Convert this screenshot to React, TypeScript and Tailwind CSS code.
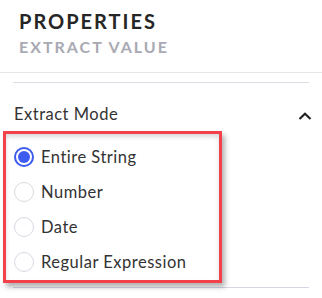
const options = ["Entire String", "Number", "Date", "Regular Expression"];

function Radio({ checked }: { checked: boolean }) {
  if (checked) {
    return (
      <span className="flex h-[20px] w-[20px] shrink-0 items-center justify-center rounded-full border-2 border-[#3d5af1]">
        <span className="h-[12px] w-[12px] rounded-full bg-[#3d5af1]" />
      </span>
    );
  }
  return <span className="h-[20px] w-[20px] shrink-0 rounded-full border border-[#d9d9e3] bg-white" />;
}

export default function App() {
  return (
    <div className="h-[298px] w-[322px] overflow-hidden bg-white font-['Lato',sans-serif]">
      <div className="px-[19px] pt-[9px] pb-[15px]">
        <div className="text-[20px] font-bold leading-[24px] tracking-[2px] text-[#262626]">PROPERTIES</div>
        <div className="mt-[4px] text-[16px] font-bold leading-[20px] tracking-[2px] text-[#a9a9b3]">EXTRACT VALUE</div>
      </div>
      <div className="border-t border-[#e6e6ea]" />
      <div className="mx-[13px] mt-[9px] border-t border-[#dcdce6]" />
      <div className="flex items-center justify-between pl-[14px] pr-[10px] pt-[19px]">
        <span className="text-[16.5px] leading-[24px] tracking-[0.5px] text-[#333]">Extract Mode</span>
        <svg width="14" height="8" viewBox="0 0 14 8" className="mt-[4px]">
          <path d="M1.5 7 L7 1.8 L12.5 7" fill="none" stroke="#222" strokeWidth="2.2" />
        </svg>
      </div>
      <div className="relative ml-[3px] mt-[5px] w-[219px] border-[3px] border-[#f2414b] shadow-[3px_4px_5px_rgba(0,0,0,0.3),inset_0_3px_4px_rgba(0,0,0,0.15)]">
        <div className="flex flex-col gap-[15px] px-[8px] pt-[13px] pb-[8px]">
          {options.map((o, i) => (
            <div key={o} className="flex h-[20px] items-center gap-[7px]">
              <Radio checked={i === 0} />
              <span className="text-[16.5px] leading-[20px] tracking-[0.5px] text-[#333]">{o}</span>
            </div>
          ))}
        </div>
      </div>
      <div className="mx-[13px] mt-[4px] border-t border-[#d6d6e6]" />
    </div>
  );
}
